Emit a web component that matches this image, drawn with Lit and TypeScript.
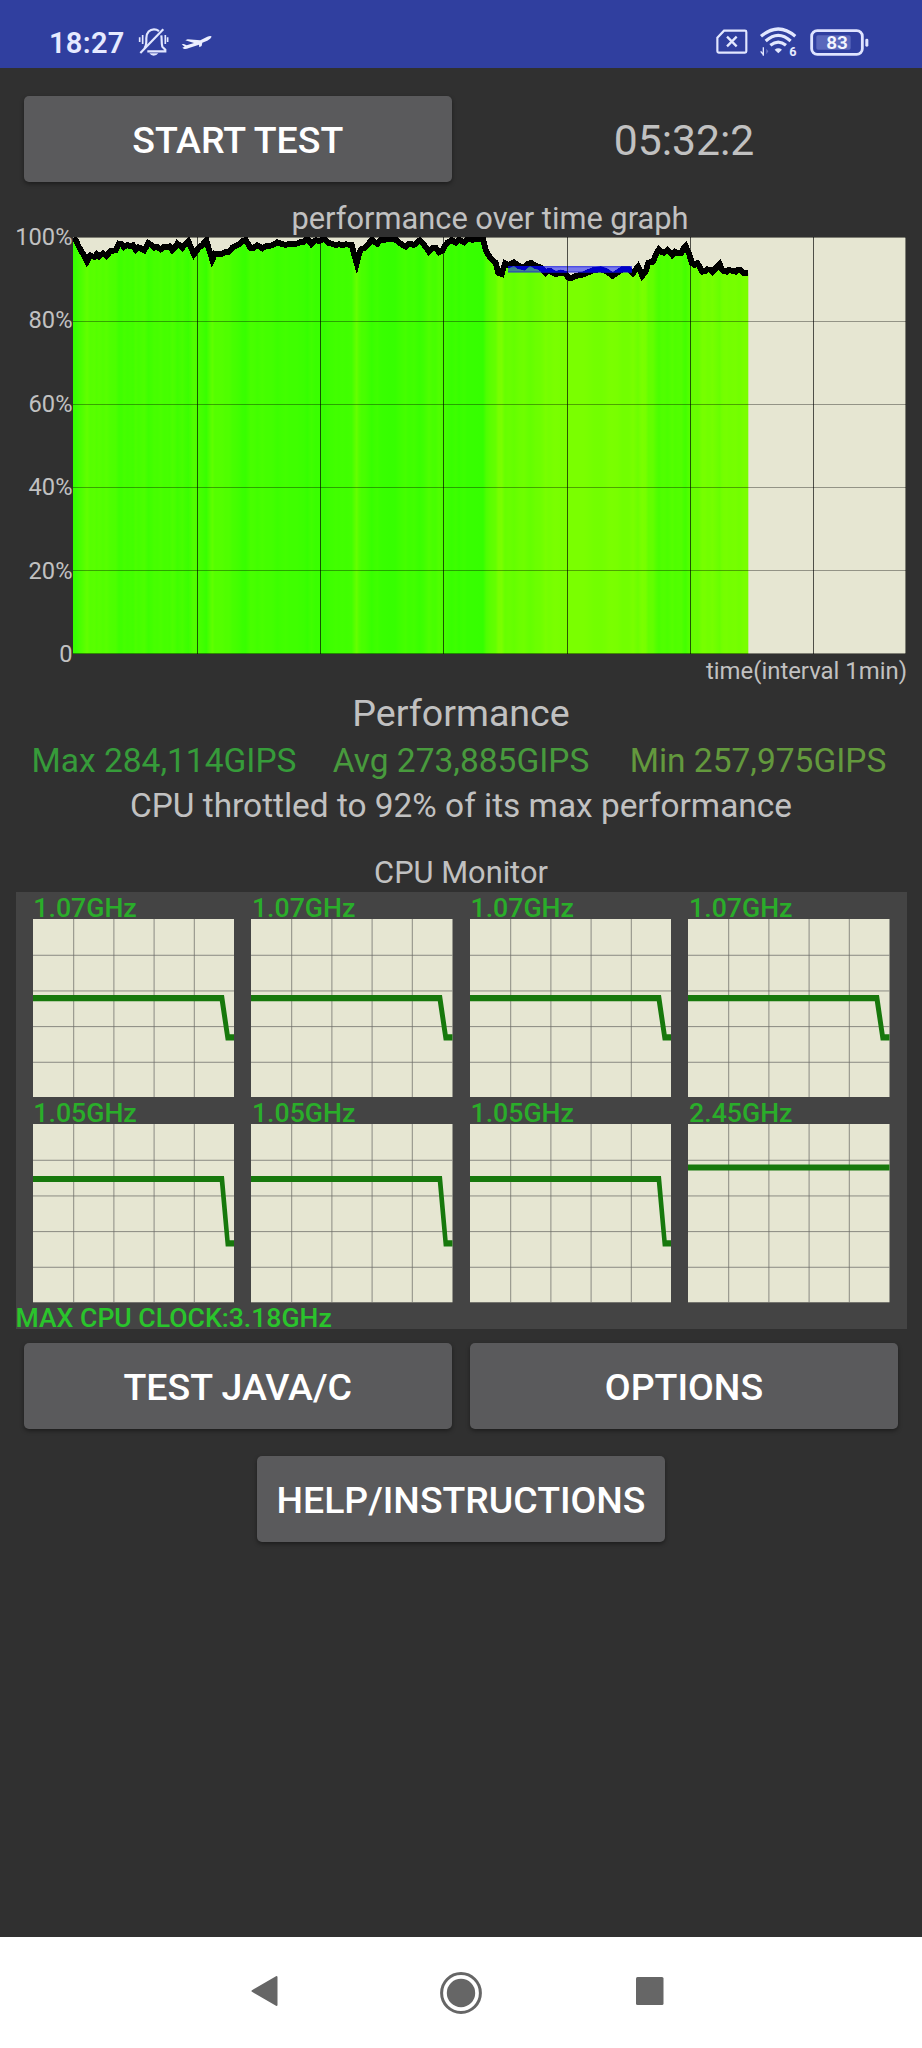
import { LitElement, html, svg, css } from "lit";
import { customElement, property } from "lit/decorators.js";

type Point = [number, number];

const CHART_W = 833;
const CHART_H = 417;
const MINUTE = 123.35;

// Trace samples at a third of a pixel: horizontal offset, depth below the 100% line.
const SAMPLES: Point[] = [
  [0, 4], [8, 10], [18, 30], [30, 50], [42, 73], [52, 55], [64, 60], [71, 52], [78, 58], [90, 49], [100, 57], [113, 42],
  [128, 40], [138, 20], [147, 22], [153, 30], [163, 24], [173, 28], [180, 25], [188, 38], [196, 31], [203, 34], [214, 40],
  [226, 18], [236, 24], [243, 32], [254, 30], [263, 37], [273, 29], [283, 30], [290, 28], [298, 40], [306, 32], [313, 20],
  [321, 26], [328, 32], [338, 20], [346, 12], [354, 32], [363, 52], [378, 32], [390, 22], [400, 9], [408, 38], [418, 68],
  [426, 50], [433, 52], [448, 50], [458, 45], [468, 44], [478, 32], [488, 27], [500, 20], [508, 12], [518, 9], [533, 34],
  [543, 32], [553, 25], [568, 34], [578, 28], [588, 27], [600, 24], [613, 16], [624, 20], [638, 24], [648, 20], [658, 20],
  [670, 20], [683, 15], [693, 14], [703, 5], [715, 21], [728, 10], [740, 12], [753, 6], [768, 18], [778, 20], [788, 25],
  [798, 22], [808, 24], [820, 22], [836, 24], [843, 50], [851, 79], [858, 50], [866, 35], [874, 34], [883, 25], [896, 8],
  [904, 15], [913, 20], [922, 10], [930, 9], [950, 6], [968, 8], [978, 17], [986, 22], [998, 29], [1005, 22], [1013, 20],
  [1023, 24], [1033, 16], [1040, 10], [1052, 22], [1060, 32], [1068, 44], [1078, 34], [1088, 32], [1098, 46], [1108, 41],
  [1116, 26], [1123, 17], [1136, 9], [1148, 17], [1158, 8], [1173, 16], [1183, 7], [1200, 8], [1230, 5], [1240, 44],
  [1253, 64], [1268, 77], [1276, 107], [1286, 111], [1296, 79], [1308, 84], [1323, 76], [1338, 87], [1353, 91], [1363, 82],
  [1373, 77], [1388, 87], [1400, 90], [1408, 96], [1418, 108], [1426, 102], [1433, 103], [1441, 108], [1448, 111],
  [1463, 107], [1478, 111], [1486, 122], [1493, 124], [1508, 117], [1523, 114], [1533, 112], [1543, 107], [1563, 99],
  [1583, 97], [1598, 102], [1608, 108], [1618, 117], [1633, 107], [1648, 97], [1668, 97], [1680, 109], [1695, 89],
  [1702, 102], [1708, 116], [1718, 104], [1726, 77], [1740, 74], [1750, 50], [1758, 37], [1766, 46], [1773, 47],
  [1783, 39], [1791, 46], [1798, 54], [1806, 44], [1813, 47], [1825, 49], [1832, 34], [1838, 28], [1848, 49], [1856, 77],
  [1864, 84], [1873, 79], [1880, 90], [1888, 104], [1896, 103], [1903, 97], [1911, 98], [1918, 104], [1930, 92],
  [1940, 81], [1946, 96], [1953, 102], [1961, 104], [1968, 99], [1978, 102], [1988, 104], [1996, 98], [2003, 99],
  [2013, 109], [2026, 109],
];

const TRACE: Point[] = SAMPLES.map(([x, y]) => [x / 3, y / 3]);
const LAST_X = TRACE[TRACE.length - 1][0];
const TRACE_TEXT = TRACE.map(([x, y]) => `${x.toFixed(1)},${y.toFixed(1)}`).join(" ");

const heat = (depth: number) => {
  const lost = (depth / CHART_H) * 100;
  return `rgb(${Math.round(Math.min(122, 50 + lost * 8.2))},255,0)`;
};

@customElement("status-bar")
class StatusBar extends LitElement {
  static styles = css`
    :host {
      display: flex;
      align-items: center;
      height: 68px;
      box-sizing: border-box;
      padding: 16px 53px 0 49px;
      background: #303f9f;
      color: #e6eaff;
    }
    .time { font-size: 29px; font-weight: 600; line-height: 32px; padding-top: 1px; width: 89px; letter-spacing: 0.3px; }
    .spacer { flex: 1; }
    svg { display: block; flex: none; overflow: visible; font-family: Roboto, sans-serif; }
    .plane { margin-left: 12px; }
    .wifi { margin-left: 12px; }
    .battery { margin-left: 13px; }
  `;
  render() {
    return html`
      <span class="time">18:27</span>
      <svg width="31.3" height="30" viewBox="414 80 94 90" fill="none" stroke="#e2e7ff" stroke-width="6.5">
        <path d="M433 143 C440 136 439 128 439 114 C439 96 450 87 462 87 C468 87 473 89 477 92" />
        <path d="M484 105 C486 116 484 130 487 139 L496 148 V153 H442" />
        <path d="M421 158 L490 87" />
        <path d="M448 159 H475 Q470 166 461 166 Q453 166 448 159Z" fill="#e2e7ff" stroke="none" />
        <path d="M428 104 V131 M496 104 V131" stroke-width="5" />
        <path d="M419 111 V125 M503 111 V125" stroke-width="5" />
      </svg>
      <svg class="plane" width="31.3" height="16.7" viewBox="543 98 94 50" fill="#eceffF">
        <path d="M545 129 L551 128 L560 132 L582 125 L556 117 L563 114 L601 117 L622 106 Q633 102 635 106 Q633 112 622 118 L607 124 L605 134 L598 138 L597 130 L567 140 Q556 145 551 142 L547 139 L554 136 Z" />
      </svg>
      <span class="spacer"></span>
      <svg width="31.7" height="25.3" viewBox="230 88 95 76" fill="none" stroke="#e2e7ff" stroke-width="6.5">
        <path d="M254 93 H317 Q321 93 321 97 V155 Q321 159 317 159 H238 Q234 159 234 155 V114 Z" />
        <path d="M263 111 L292 140 M292 111 L263 140" stroke-width="7" />
      </svg>
      <svg class="wifi" width="37.3" height="29.3" viewBox="361 85 112 88" fill="none" stroke="#e2e7ff" stroke-width="9.5">
        <path d="M364 113 Q416 69 467 113" />
        <path d="M378 127 Q416 93 453 127" />
        <path d="M392 140 Q416 121 439 140" />
        <path d="M405 153 Q416 145 427 153 L416 164Z" fill="#e2e7ff" stroke="none" />
        <path d="M371 146 V171 M372 169 L363 158" stroke-width="4" />
        <path d="M380 150 V167 L386 158Z" fill="#6d79c6" stroke="none" />
        <text x="449" y="171" font-size="38" font-weight="700" fill="#e6eaff" stroke="none">6</text>
      </svg>
      <svg class="battery" width="59" height="27" viewBox="509 86 177 81" fill="none" stroke="#dfe4ff">
        <rect x="514" y="91" width="152" height="71" rx="17" stroke-width="8.5" />
        <rect x="528" y="105" width="103" height="43" rx="5" fill="#5a67bb" stroke="none" />
        <rect x="675" y="115" width="9" height="24" rx="4" fill="#dfe4ff" stroke="none" />
        <text x="590" y="147" text-anchor="middle" font-size="57" font-weight="600" fill="#f4f6ff" stroke="none">83</text>
      </svg>
    `;
  }
}

@customElement("throttle-chart")
class ThrottleChart extends LitElement {
  static styles = css`
    :host { display: grid; grid-template-columns: 72.5px 833px; column-gap: 0.5px; height: 417px; }
    .labels {
      display: flex;
      flex-direction: column;
      justify-content: space-between;
      height: 441px;
      margin-top: -12px;
      text-align: right;
      font-size: 23.7px;
      line-height: 24px;
    }
    svg { display: block; }
  `;
  render() {
    return html`
      <div class="labels">${["100%", "80%", "60%", "40%", "20%", "0"].map((t) => html`<span>${t}</span>`)}</div>
      <svg width=${CHART_W} height=${CHART_H} viewBox="0 0 833 417">
        <defs>
          <linearGradient id="heat" gradientUnits="userSpaceOnUse" x1="0" x2=${LAST_X} y1="0" y2="0">
            ${TRACE.map(([x, y]) => svg`<stop offset=${x / LAST_X} stop-color=${heat(y)} />`)}
          </linearGradient>
          <clipPath id="band"><rect x="435" y="29" width="124" height="6.5" /></clipPath>
        </defs>
        <rect width="833" height="417" fill="#e6e6d2" />
        <polygon points="0,417 ${TRACE_TEXT} ${LAST_X},417" fill="url(#heat)" />
        <polyline points=${TRACE_TEXT} fill="none" stroke="#000" stroke-width="5.8" shape-rendering="crispEdges" />
        <rect x="435" y="29" width="124" height="6.5" fill="#2222ff" fill-opacity="0.56" />
        <rect x="435" y="29" width="124" height="1.4" fill="#3030e0" fill-opacity="0.6" />
        <rect x="435" y="34.2" width="124" height="1.3" fill="#2020d0" fill-opacity="0.5" />
        <polyline points=${TRACE_TEXT} fill="none" stroke="#0000c8" stroke-width="5.8" clip-path="url(#band)" />
        ${[84, 167, 250, 333].map((y) => svg`<rect x="0" y=${y} width="833" height="1" fill="#000" fill-opacity="0.36" />`)}
        ${[1, 2, 3, 4, 5, 6].map((i) => svg`<rect x=${Math.round(i * MINUTE + 0.3)} y="0" width="1" height="417" fill="#000" fill-opacity="0.66" />`)}
        <path d="M0 .5 H833 M0 416.5 H833 M832.5 0 V417" stroke="#000" stroke-opacity="0.45" fill="none" />
      </svg>
    `;
  }
}

@customElement("core-graph")
class CoreGraph extends LitElement {
  @property() label = "";
  @property({ type: Number }) level = 0;
  @property({ type: Number }) drop = 0;
  static styles = css`
    :host { display: block; color: #2aad2a; }
    .label { height: 27px; line-height: 32.5px; font-size: 26.7px; font-weight: 500; padding-left: 0.8px; }
    svg { display: block; }
  `;
  render() {
    const t = this.level - 3;
    const b = this.level + 3.2;
    const d = this.drop
      ? `M0 ${t} H191 L196.7 ${this.drop - 3} H201.5 V${this.drop + 3.2} H192.7 L186.8 ${b} H0Z`
      : `M0 ${t} H201.5 V${b} H0Z`;
    return html`
      <div class="label">${this.label}</div>
      <svg width="201.5" height="178.3" viewBox="0 0 201.5 178.3">
        <rect width="201.5" height="178.3" fill="#e6e6d2" />
        ${[1, 2, 3, 4].map(
          (i) => svg`<path d="M${i * 40.2 + 0.5} 0 V178.3 M0 ${i * 35.67 + 0.6} H201.5" stroke="#6c6c68" stroke-opacity="0.75" />`
        )}
        <path d=${d} fill="#17780c" />
      </svg>
    `;
  }
}

@customElement("app-root")
class AppRoot extends LitElement {
  static styles = css`
    :host {
      display: flex;
      flex-direction: column;
      height: 2048px;
      background: #303030;
      color: #c1c1c1;
      font-family: Roboto, sans-serif;
      white-space: nowrap;
    }
    main { flex: 1; }
    .row { display: grid; grid-template-columns: 427.5px 428px; column-gap: 18.5px; padding: 0 24px; }
    .top { margin-top: 28px; }
    button {
      height: 85.5px;
      border: 0;
      padding: 0;
      border-radius: 5px;
      background: #5a5a5c;
      color: #fff;
      font: 500 37.5px/42px Roboto, sans-serif;
      padding-top: 3px;
      box-shadow: 0 2px 4px rgba(0, 0, 0, 0.4);
    }
    .timer { text-align: center; font-size: 42.7px; line-height: 88px; height: 86px; }
    .title { padding: 18px 0 0 58px; text-align: center; font-size: 30.8px; line-height: 37px; }
    .axis { text-align: right; padding-right: 15px; font-size: 23.9px; line-height: 34px; }
    .heading { text-align: center; font-size: 37.6px; line-height: 50px; }
    .stats {
      display: grid;
      grid-template-columns: repeat(3, 1fr);
      padding: 0 15.5px;
      text-align: center;
      font-size: 33.5px;
      line-height: 46px;
    }
    .max { color: #369b3a; }
    .avg { color: #489a3d; }
    .min { color: #63993d; }
    .note { text-align: center; font-size: 33.4px; line-height: 44px; }
    .monitor { text-align: center; font-size: 30.8px; line-height: 38px; padding-top: 26px; }
    .panel { margin: 0 15.5px; height: 437px; background: #444; }
    .cores {
      display: grid;
      grid-template-columns: repeat(4, 201.5px);
      column-gap: 17.1px;
      padding-left: 17px;
    }
    .clock { color: #2ac42c; font-size: 26.6px; font-weight: 500; line-height: 30px; }
    .pair { margin-top: 14px; }
    .help { display: block; width: 408px; margin: 27.5px auto 0; font-size: 37.4px; }
    nav { height: 111px; background: #fff; display: flex; align-items: center; padding-left: 251px; box-sizing: border-box; }
    nav svg { display: block; margin-bottom: 4px; }
    nav .home { margin: 0 153.5px 0 162px; }
  `;
  render() {
    const cores = [
      ["1.07GHz", 79, 118.3], ["1.07GHz", 79, 118.3], ["1.07GHz", 79, 118.3], ["1.07GHz", 79, 118.3],
      ["1.05GHz", 54.9, 119.2], ["1.05GHz", 54.9, 119.2], ["1.05GHz", 54.9, 119.2], ["2.45GHz", 43.4, 0],
    ];
    return html`
      <status-bar></status-bar>
      <main>
        <div class="row top">
          <button>START TEST</button>
          <div class="timer">05:32:2</div>
        </div>
        <div class="title">performance over time graph</div>
        <throttle-chart></throttle-chart>
        <div class="axis">time(interval 1min)</div>
        <div class="heading">Performance</div>
        <div class="stats">
          <span class="max">Max 284,114GIPS</span>
          <span class="avg">Avg 273,885GIPS</span>
          <span class="min">Min 257,975GIPS</span>
        </div>
        <div class="note">CPU throttled to 92% of its max performance</div>
        <div class="monitor">CPU Monitor</div>
        <div class="panel">
          <div class="cores">
            ${cores.map(([label, level, drop]) => html`<core-graph .label=${label} .level=${level} .drop=${drop}></core-graph>`)}
          </div>
          <div class="clock">MAX CPU CLOCK:3.18GHz</div>
        </div>
        <div class="row pair">
          <button>TEST JAVA/C</button>
          <button>OPTIONS</button>
        </div>
        <button class="help">HELP/INSTRUCTIONS</button>
      </main>
      <nav>
        <svg width="27" height="32" viewBox="0 0 27 32"><path d="M1.5 16 L25.5 2 V30Z" fill="#666" stroke="#666" stroke-width="2" stroke-linejoin="round" /></svg>
        <svg class="home" width="42" height="42" viewBox="0 0 42 42"><circle cx="21" cy="21" r="19.4" fill="none" stroke="#666" stroke-width="3" /><circle cx="21" cy="21" r="14.2" fill="#666" /></svg>
        <svg width="28" height="28" viewBox="0 0 28 28"><rect width="27.5" height="28" rx="1.5" fill="#666" /></svg>
      </nav>
    `;
  }
}
